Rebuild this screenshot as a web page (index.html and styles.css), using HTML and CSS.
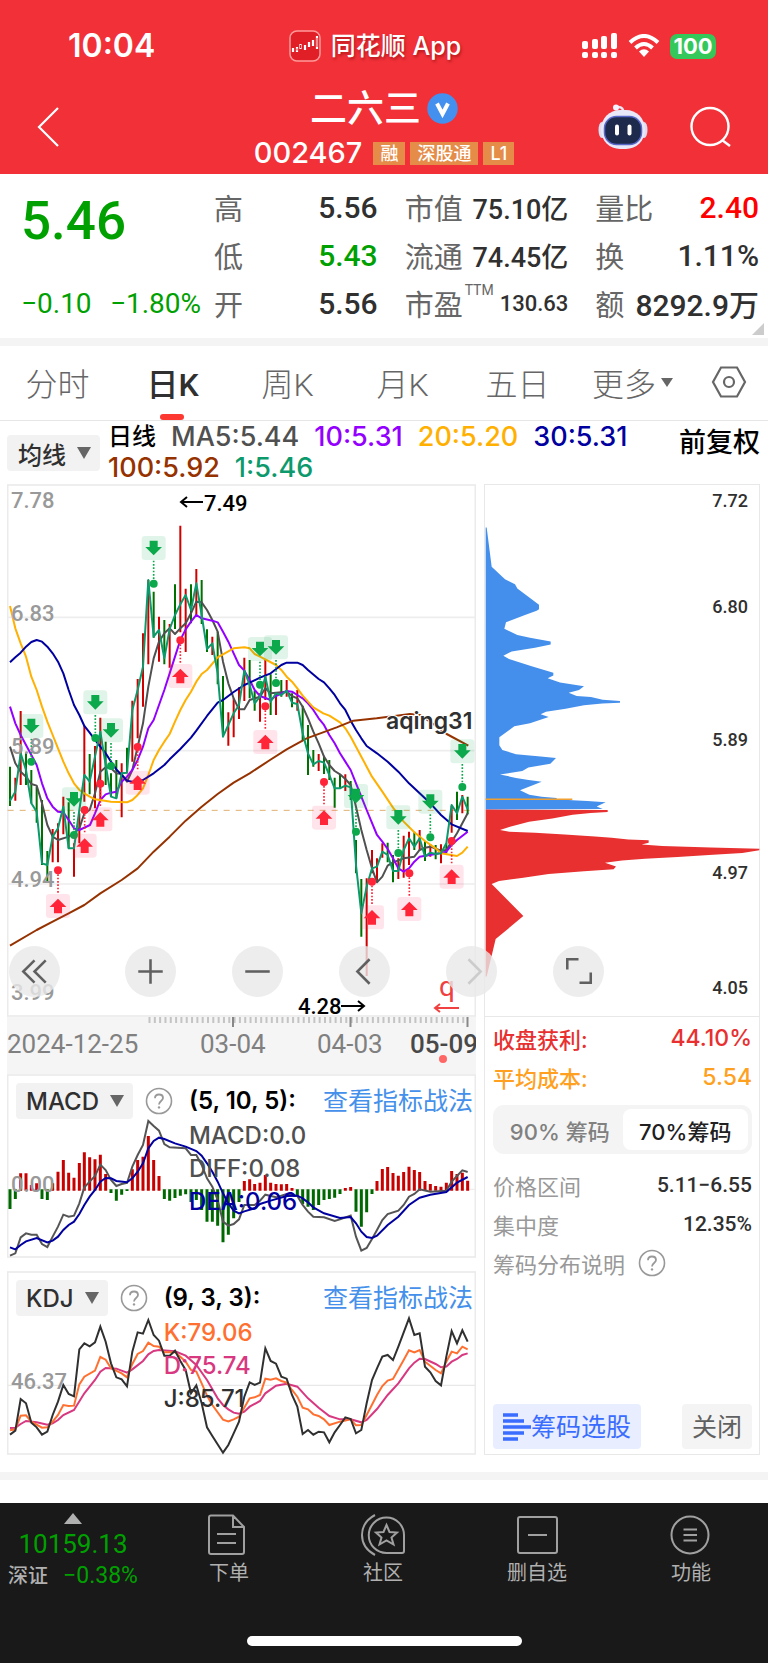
FILE: index.html
```html
<!DOCTYPE html>
<html lang="zh-CN">
<head>
<meta charset="utf-8">
<meta name="viewport" content="width=device-width, initial-scale=1">
<title>二六三 002467</title>
<link rel="stylesheet" href="styles.css">
</head>
<body>
<svg class="defs" aria-hidden="true">
  <defs>
    <g id="sell">
      <rect x="-36" y="-36" width="72" height="72" rx="10" fill="#0aa84a" fill-opacity=".12"/>
      <path d="M-12 -22H12V-3H25L0 22L-25 -3H-12Z" fill="#0ca84c"/>
      <path d="M0 38V104" stroke="#0ca84c" stroke-width="5" stroke-dasharray="5 5"/>
      <circle cy="107" r="12" fill="#0ca84c"/>
    </g>
    <g id="buy">
      <rect x="-36" y="-36" width="72" height="72" rx="10" fill="#ff1f5a" fill-opacity=".12"/>
      <path d="M-12 22H12V3H25L0 -22L-25 3H-12Z" fill="#ff2438"/>
      <path d="M0 -40V-104" stroke="#ff2438" stroke-width="5" stroke-dasharray="5 5"/>
      <circle cy="-107" r="12" fill="#ff2438"/>
    </g>
    <symbol id="help" viewBox="0 0 28 28">
      <circle cx="14" cy="14" r="12.5" fill="none" stroke="#999" stroke-width="1.6"/>
      <path d="M10 11.2C10 6.2 18 6.4 18 11C18 14 14 14 14 17.4" fill="none" stroke="#999" stroke-width="1.8"/>
      <circle cx="14" cy="20.4" r="1.2" fill="#999"/>
    </symbol>
  </defs>
</svg>

<header class="top">
  <div class="status">
    <span class="clock">10:04</span>
    <span class="source">
      <svg width="32" height="32" viewBox="0 0 32 32"><rect x="1" y="1" width="30" height="30" rx="7" fill="#e01f26" stroke="#ff9a9a" stroke-width="1.5"/><path d="M4 18V22M8 17V22M11.500 14V19M16 15V20M20 12V17M24 10V16M28 6V19" stroke="#fff" stroke-width="2.200"/><path d="M8 18.500V20.500M11.500 15V18M28 8V17" stroke="#e01f26" stroke-width="1"/></svg>
      同花顺 App
    </span>
    <span class="signals">
      <svg width="36" height="26" viewBox="0 0 36 26" fill="#fff"><rect y="8" width="6" height="8" rx="2"/><rect x="10" y="6" width="6" height="10" rx="2"/><rect x="19" y="3" width="6" height="13" rx="2"/><rect x="29" y="0" width="6" height="16" rx="2"/><rect y="19" width="6" height="6" rx="2"/><rect x="10" y="19" width="6" height="6" rx="2"/><rect x="19" y="19" width="6" height="6" rx="2"/><rect x="29" y="19" width="6" height="6" rx="2"/></svg>
      <svg width="32" height="24" viewBox="0 0 32 24" fill="none" stroke="#fff" stroke-width="4"><path d="M2 8.500Q16 -4.500 30 8.500"/><path d="M7.500 14Q16 6 24.500 14"/><path d="M11 17.500Q16 13 21 17.500L16 23Z" fill="#fff" stroke="none"/></svg>
      <span class="battery">100</span>
    </span>
  </div>
  <div class="titlebar">
    <button class="icon-btn back" aria-label="返回"><svg width="24" height="40" viewBox="0 0 24 40"><path d="M22 1L3 20L22 39" fill="none" stroke="#fff" stroke-width="2.200"/></svg></button>
    <div class="name">
      <h1>二六三<svg width="31" height="31" viewBox="0 0 31 31"><circle cx="15.500" cy="15.500" r="15.200" fill="#4490ee"/><path d="M10 10.500L15.500 21L21 10.500" fill="none" stroke="#fff" stroke-width="4"/></svg></h1>
      <p><span class="code">002467</span><span class="tag">融</span><span class="tag">深股通</span><span class="tag">L1</span></p>
    </div>
    <div class="actions">
      <button class="icon-btn" aria-label="助手">
        <svg width="50" height="48" viewBox="0 0 50 48"><path d="M25 10Q26 4 20 4" fill="none" stroke="#e8e6f5" stroke-width="2.500"/><circle cx="18" cy="4.500" r="3" fill="#f4f2ff"/><ellipse cx="4" cy="27" rx="3.500" ry="8" fill="#dcdcf2"/><ellipse cx="46" cy="27" rx="3.500" ry="8" fill="#dcdcf2"/><rect x="3" y="7" width="44" height="39" rx="19" fill="#e9e8f8"/><rect x="6.500" y="13.500" width="37" height="28" rx="12" fill="#1d2a4b" stroke="#5866c8" stroke-width="1.500"/><rect x="17" y="21.500" width="4" height="11" rx="2" fill="#fff"/><rect x="29.500" y="21.500" width="4" height="11" rx="2" fill="#fff"/></svg>
      </button>
      <button class="icon-btn" aria-label="搜索"><svg width="42" height="42" viewBox="0 0 42 42" fill="none" stroke="#fff" stroke-width="2.400"><circle cx="20" cy="20.500" r="18.500"/><path d="M32 34L40 40"/></svg></button>
    </div>
  </div>
</header>

<main>
<section class="quote">
  <div class="price"><strong>5.46</strong><span>−0.10</span><span>−1.80%</span></div>
  <dl class="c1">
    <div><dt>高</dt><dd>5.56</dd></div>
    <div><dt>低</dt><dd class="down">5.43</dd></div>
    <div><dt>开</dt><dd>5.56</dd></div>
  </dl>
  <dl class="c2">
    <div><dt>市值</dt><dd>75.10亿</dd></div>
    <div><dt>流通</dt><dd>74.45亿</dd></div>
    <div><dt>市盈<sup>TTM</sup></dt><dd class="small">130.63</dd></div>
  </dl>
  <dl class="c3">
    <div><dt>量比</dt><dd class="up">2.40</dd></div>
    <div><dt>换</dt><dd>1.11%</dd></div>
    <div><dt>额</dt><dd>8292.9万</dd></div>
  </dl>
</section>

<nav class="tabs">
  <button>分时</button>
  <button class="on">日K</button>
  <button>周K</button>
  <button>月K</button>
  <button>五日</button>
  <button>更多<i class="caret sm"></i></button>
  <button aria-label="设置"><svg width="36" height="32" viewBox="0 0 36 32" fill="none" stroke="#666" stroke-width="2.200"><path d="M10 1.500H26L34 16L26 30.500H10L2 16Z"/><circle cx="18" cy="16" r="5"/></svg></button>
</nav>

<section class="legend">
  <button class="pick">均线<i class="caret"></i></button>
  <p><b>日线</b><span class="ma5">MA5:5.44</span><span class="ma10">10:5.31</span><span class="ma20">20:5.20</span><span class="ma30">30:5.31</span><span class="ma100">100:5.92</span><span class="ma1">1:5.46</span></p>
  <button class="adjust">前复权</button>
</section>

<section class="board">
  <div class="left">
    <svg class="chart" viewBox="7 484 469 533" role="img" aria-label="日K线图">
      <g transform="translate(0 480) scale(.33333)" fill="none">
        <rect x="23" y="15" width="1403" height="1593" stroke="#ebebeb" stroke-width="5"/>
        <path d="M23 412H1426M23 812H1426M23 1212H1426" stroke="#ededed" stroke-width="5"/>
        <path d="M23 991H1426" stroke="#e0b070" stroke-width="3" stroke-dasharray="18 18"/>
        <path stroke="#007000" stroke-width="6" d="M30 860V978M78 820V915M94 870V970M110 920V1028M126 960V1155M142 1113V1203M206 967V1105M269 822V943M317 785V915M333 880V950M349 840V955M381 803V880M461 335V473M493 420V553M525 313V447M573 313V430M605 300V432M621 448V516M653 455V613M669 588V770M749 540V655M764 632V692M812 583V705M844 600V650M876 640V682M908 677V780M924 735V885M940 810V860M972 827V882M988 840V900M1004 893V983M1020 885V925M1052 903V960M1068 1080V1180M1084 1197V1370M1163 1088V1147M1179 1125V1207M1243 1055V1110M1275 1083V1143M1307 1095V1138M1339 1090V1120M1371 935V1020M1403 950V1003"/>
        <path stroke="#d00000" stroke-width="6" d="M46 893V962M62 693V915M158 1047V1147M174 1030V1147M190 950V1063M222 1090V1190M238 1000V1090M253 737V965M285 798V985M301 713V960M365 850V1012M397 662V845M413 597V775M429 460V680M445 300V553M477 410V545M509 432V563M541 137V457M557 326V516M589 267V405M637 470V525M685 697V797M701 655V772M717 622V717M733 533V663M780 640V725M796 540V660M828 640V705M860 600V650M892 630V692M956 822V873M1036 883V933M1100 1195V1488M1116 1110V1180M1131 1135V1200M1147 1090V1133M1195 1135V1197M1211 1067V1193M1227 1055V1155M1259 1050V1110M1291 1093V1130M1323 1093V1150M1355 977V1058M1387 945V1000"/>
        <g stroke-width="6" stroke-linejoin="round">
          <polyline stroke="#505050" points="30,800 46,850 62,875 78,890 94,912 110,917 126,970 142,1035 158,1070 174,1080 206,1070 222,1060 238,1045 253,1000 269,990 285,940 301,875 317,862 333,865 349,880 365,882 381,905 397,870 413,800 429,730 445,620 461,535 477,485 493,460 509,445 525,462 541,445 557,430 573,400 589,365 605,367 621,390 637,420 653,455 669,545 685,610 701,655 717,688 733,688 749,660 780,650 796,625 812,640 860,635 876,648 892,655 908,680 924,715 940,755 956,790 972,830 988,855 1004,873 1020,883 1036,897 1052,915 1068,980 1084,1050 1100,1110 1116,1165 1131,1207 1147,1190 1163,1157 1179,1147 1211,1135 1243,1130 1259,1110 1275,1103 1291,1100 1323,1112 1339,1110 1355,1085 1371,1060 1387,1030 1403,1000"/>
          <polyline stroke="#9400ff" points="30,680 46,730 62,765 78,795 94,825 110,855 126,910 142,955 158,980 174,995 190,997 206,1020 222,1045 238,1050 270,1035 285,1000 301,960 317,943 333,938 349,935 365,905 381,890 397,870 413,840 429,800 445,745 461,720 477,675 493,630 509,580 525,530 541,480 557,448 573,425 589,405 605,415 637,422 653,427 669,455 685,485 701,520 717,555 733,572 749,600 764,630 780,648 812,660 828,648 860,633 876,635 892,645 908,655 924,670 940,690 956,715 972,735 988,765 1004,790 1020,820 1036,845 1052,870 1068,910 1084,950 1100,990 1131,1065 1147,1085 1163,1107 1179,1135 1195,1165 1211,1175 1227,1165 1243,1145 1259,1130 1307,1122 1339,1115 1355,1095 1371,1080 1403,1055"/>
          <polyline stroke="#ffb000" points="30,378 46,445 62,490 78,530 94,590 110,630 126,680 142,725 158,765 174,805 190,845 206,880 222,910 238,930 253,940 269,950 285,958 333,965 381,967 397,960 413,945 429,925 445,885 461,840 477,810 493,785 509,762 525,725 541,690 557,660 573,635 589,605 605,582 621,570 653,532 669,523 701,505 733,502 749,505 764,522 780,530 828,555 844,570 860,590 876,605 892,625 908,647 924,665 940,682 970,700 988,707 1020,727 1036,745 1052,770 1068,800 1084,830 1100,860 1116,890 1147,935 1179,983 1211,1025 1243,1057 1275,1083 1307,1105 1323,1120 1371,1128 1387,1118 1403,1100"/>
          <polyline stroke="#0000a0" points="30,547 46,532 62,518 78,500 94,486 110,480 126,485 142,500 158,520 174,545 190,580 206,630 222,675 238,705 253,738 269,758 285,780 301,800 317,820 333,845 349,868 365,885 381,902 397,905 413,902 429,900 461,880 493,855 509,838 541,807 573,773 589,752 621,708 653,668 669,660 701,636 733,615 749,608 780,593 812,580 844,555 860,548 892,548 908,555 924,570 956,597 972,607 988,625 1004,645 1020,670 1036,690 1052,722 1068,750 1084,775 1100,798 1131,820 1163,845 1195,875 1227,910 1259,940 1291,970 1323,1005 1355,1033 1403,1053"/>
          <polyline stroke="#963200" points="30,1397 110,1350 158,1325 206,1300 253,1275 301,1240 365,1200 413,1165 461,1115 509,1070 557,1022 605,980 653,942 701,908 749,880 810,840 860,808 920,775 1010,742 1060,722 1130,715 1190,707 1230,702 1260,705 1300,732 1340,762 1405,797"/>
          <polyline stroke="#0c9a6c" points="30,962 46,935 62,820 78,870 94,970 110,995 126,1150 142,1155 158,1070 174,1045 190,980 206,1105 222,1105 238,990 253,885 269,905 285,830 301,755 317,855 333,950 349,955 365,880 381,878 397,690 413,630 429,560 445,300 461,470 477,450 493,535 509,447 525,405 541,373 557,345 573,390 589,310 605,405 621,507 637,490 653,580 669,770 685,735 701,700 717,675 733,572 749,615 764,670 780,650 796,590 812,665 828,640 844,645 860,632 876,668 892,672 908,760 924,820 940,853 956,843 972,848 988,885 1004,925 1020,925 1036,917 1052,922 1068,1155 1084,1300 1100,1220 1116,1165 1131,1160 1147,1115 1163,1125 1179,1173 1195,1173 1211,1110 1227,1075 1243,1100 1259,1075 1275,1130 1291,1118 1307,1122 1323,1120 1339,1090 1355,975 1371,1000 1387,950 1403,988"/>
        </g>
        <use href="#sell" x="94" y="738"/><use href="#sell" x="222" y="958"/><use href="#sell" x="286" y="667"/><use href="#sell" x="333" y="751"/><use href="#sell" x="461" y="204"/><use href="#sell" x="780" y="507"/><use href="#sell" x="828" y="502"/><use href="#sell" x="1068" y="948"/><use href="#sell" x="1195" y="1012"/><use href="#sell" x="1291" y="965"/><use href="#sell" x="1387" y="814"/>
        <use href="#buy" x="174" y="1278"/><use href="#buy" x="254" y="1097"/><use href="#buy" x="301" y="1018"/><use href="#buy" x="413" y="908"/><use href="#buy" x="541" y="588"/><use href="#buy" x="796" y="786"/><use href="#buy" x="972" y="1013"/><use href="#buy" x="1116" y="1312"/><use href="#buy" x="1228" y="1287"/><use href="#buy" x="1355" y="1190"/>
      </g>
      <g class="scale">
        <text x="11" y="508">7.78</text><text x="11" y="621">6.83</text><text x="11" y="754">5.89</text><text x="11" y="887">4.94</text><text x="11" y="1000">3.99</text>
      </g>
      <g class="peak"><text x="204" y="511">7.49</text><text x="298" y="1014">4.28</text></g>
      <path d="M203 502H181M187 497L181 502L187 507M341 1006H364M358 1001L364 1006L358 1011" fill="none" stroke="#000" stroke-width="2"/>
      <text class="user" x="386" y="729">aqing31</text>
      <text class="mark" x="439" y="996">q</text>
      <path d="M459 1008H435M440 1004L435 1008L440 1012" fill="none" stroke="#f04040" stroke-width="2"/>
    </svg>
    <svg class="chart dates" viewBox="7 1017 469 57">
      <path d="M148.500 1020H466" stroke="#c4c4c4" stroke-width="6" stroke-dasharray="2 3.318"/>
      <path d="M233 1017V1027M350.500 1017V1027M467.500 1017V1027" stroke="#888" stroke-width="2"/>
      <text x="7" y="1053">2024-12-25</text><text x="200" y="1053">03-04</text><text x="317" y="1053">04-03</text><text class="now" x="410" y="1053">05-09</text>
      <circle cx="443" cy="1059" r="4" fill="#f66"/>
    </svg>

    <article class="indicator">
      <svg class="plot" viewBox="7 1074 469 184" role="img" aria-label="MACD">
        <g transform="translate(0 1070) scale(.33333)" fill="none">
          <rect x="23" y="15" width="1403" height="546" stroke="#ebebeb" stroke-width="5"/>
          <path d="M23 358H1426" stroke="#ededed" stroke-width="4"/>
          <path stroke="#c80000" stroke-width="9" d="M62 362V310M78 362V310M94 362V345M110 362V340M158 362V340M174 362V305M190 362V270M206 362V308M222 362V323M238 362V279M253 362V247M269 362V262M285 362V268M301 362V254M317 362V312M397 362V298M413 362V270M429 362V260M445 362V198M461 362V270M477 362V318M733 362V333M749 362V328M764 362V342M780 362V338M796 362V315M812 362V338M828 362V342M844 362V343M860 362V342M876 362V354M1036 362V354M1052 362V351M1131 362V333M1147 362V297M1163 362V291M1179 362V309M1195 362V317M1211 362V306M1227 362V290M1243 362V300M1259 362V306M1275 362V333M1291 362V342M1307 362V348M1323 362V350M1339 362V338M1355 362V303M1371 362V312M1387 362V308M1403 362V332"/>
          <path stroke="#006800" stroke-width="9" d="M30 358V417M46 358V387M126 358V387M142 358V390M333 358V369M349 358V392M365 358V374M381 358V363M493 358V387M509 358V392M525 358V384M541 358V377M557 358V373M573 358V396M589 358V390M605 358V420M621 358V455M637 358V455M653 358V467M669 358V517M685 358V494M701 358V445M717 358V396M892 358V378M908 358V402M924 358V410M940 358V420M956 358V405M972 358V390M988 358V387M1004 358V383M1020 358V372M1068 358V425M1084 358V470M1100 358V427M1116 358V372"/>
          <polyline stroke="#555" stroke-width="6" points="30,557 46,550 62,502 78,490 94,494 110,494 126,522 142,531 158,500 174,470 190,434 206,440 222,437 238,400 253,352 269,335 285,318 301,284 317,300 333,330 349,348 365,342 381,339 397,290 413,255 429,225 445,153 461,168 477,182 493,222 509,232 557,235 573,255 589,255 605,285 621,325 637,350 653,390 669,455 685,467 701,462 717,448 733,405 764,405 780,392 796,374 828,382 860,372 892,378 908,405 924,425 940,440 972,442 1004,453 1020,448 1052,437 1068,500 1084,542 1100,534 1116,507 1131,480 1147,450 1163,432 1195,422 1211,405 1227,380 1243,372 1259,358 1291,365 1339,362 1355,335 1371,318 1387,301 1403,306"/>
          <polyline stroke="#0000a0" stroke-width="6" points="30,532 46,538 62,525 78,514 110,504 142,517 158,512 174,500 190,480 206,465 222,455 238,432 253,405 269,380 285,360 301,335 317,324 333,325 349,333 381,337 397,325 413,305 429,280 445,235 461,213 477,203 493,207 525,220 557,230 589,243 605,257 621,280 637,305 653,335 669,370 685,400 701,422 717,430 733,424 764,415 780,402 812,392 860,378 892,377 908,385 924,397 940,412 972,430 1020,444 1052,441 1068,460 1084,485 1100,501 1116,504 1131,497 1163,465 1195,440 1227,405 1259,383 1291,374 1339,366 1371,338 1403,321"/>
        </g>
        <g class="scale"><text x="11" y="1192">0.00</text></g>
      </svg>
      <button class="pick">MACD<i class="caret"></i></button>
      <button class="help" aria-label="说明"><svg width="28" height="28"><use href="#help"/></svg></button>
      <div class="values"><b>(5, 10, 5):</b><span class="gray">MACD:0.0</span><span class="gray">DIFF:0.08</span><span class="navy">DEA:0.06</span></div>
      <a href="#">查看指标战法</a>
    </article>

    <article class="indicator">
      <svg class="plot" viewBox="7 1271 469 184" role="img" aria-label="KDJ">
        <g transform="translate(0 1260) scale(.33333)" fill="none" stroke-width="6">
          <rect x="23" y="36" width="1403" height="546" stroke="#ebebeb" stroke-width="5"/>
          <path d="M23 376H1426" stroke="#e8e8e8" stroke-width="4"/>
          <polyline stroke="#d83880" points="30,504 46,503 62,492 78,483 110,487 142,494 158,490 174,480 190,465 222,450 253,400 285,360 301,335 317,324 349,326 381,338 397,328 429,303 445,283 461,273 477,270 525,274 557,287 589,315 621,360 653,415 669,435 685,448 701,458 717,461 733,455 749,440 780,423 796,400 828,377 860,371 892,380 924,415 956,443 988,468 1020,478 1052,478 1084,487 1100,480 1131,447 1163,405 1195,370 1227,325 1243,308 1259,296 1275,297 1307,312 1323,322 1339,320 1355,305 1371,297 1387,285 1403,280"/>
          <polyline stroke="#ff7030" points="30,511 46,508 62,467 78,466 94,485 126,503 142,502 158,485 174,465 190,435 206,438 222,437 238,373 253,350 285,332 301,291 317,299 333,325 365,340 381,352 397,312 413,282 429,273 445,248 461,258 477,260 493,277 525,277 541,290 557,305 573,330 589,335 605,370 621,407 637,435 669,479 685,484 701,478 717,470 749,415 764,412 780,405 796,356 812,359 828,355 844,363 860,368 876,390 892,410 908,443 924,448 940,463 956,468 972,478 988,495 1020,485 1052,478 1068,496 1084,495 1100,465 1131,405 1147,378 1163,362 1179,357 1211,300 1227,271 1243,277 1259,270 1275,305 1307,330 1323,340 1339,305 1355,275 1371,280 1387,260 1403,268"/>
          <polyline stroke="#303030" points="30,524 46,512 62,417 78,430 94,488 110,502 126,524 142,515 158,465 174,425 190,375 206,402 222,409 238,268 253,250 269,259 285,247 301,200 317,245 333,310 349,352 365,358 381,379 397,275 413,217 429,221 445,180 461,225 477,242 493,287 509,287 525,272 541,303 557,330 573,400 589,376 605,430 621,502 637,528 669,578 685,555 701,520 717,485 733,410 749,367 764,375 780,368 796,265 812,303 828,311 844,350 860,356 876,405 892,440 908,522 924,510 940,524 956,515 972,517 988,547 1004,517 1020,495 1036,472 1052,477 1068,520 1084,510 1100,430 1116,360 1131,325 1147,290 1163,285 1179,300 1195,260 1227,175 1243,225 1259,220 1275,320 1291,337 1307,363 1323,376 1339,290 1355,213 1371,250 1387,211 1403,245"/>
        </g>
        <g class="scale"><text x="11" y="1389">46.37</text></g>
      </svg>
      <button class="pick">KDJ<i class="caret"></i></button>
      <button class="help" aria-label="说明"><svg width="28" height="28"><use href="#help"/></svg></button>
      <div class="values"><b>(9, 3, 3):</b><span class="orange">K:79.06</span><span class="pink">D:75.74</span><span class="dark">J:85.71</span></div>
      <a href="#">查看指标战法</a>
    </article>
  </div>

  <aside class="chips">
    <svg class="chart" viewBox="484 484 276 532" role="img" aria-label="筹码分布">
      <g transform="translate(480 480) scale(.33333 .3444)">
        <path fill="#448fec" d="M17 138L20 138L35 252L75 288L105 303L112 315L177 362L177 375L170 380L135 392L78 413L73 432L112 450L150 458L212 469L212 478L165 487L95 498L70 510L87 520L155 541L220 560L220 568L203 576L240 588L312 599L297 610L266 618L290 627L333 630L368 638L420 642L420 647L367 649L312 654L257 664L198 673L182 680L206 688L150 706L103 715L58 747L58 770L67 784L108 796L182 803L228 807L211 824L145 835L127 845L60 855L108 865L146 871L185 876L120 901L148 914L185 920L230 923L230 927L277 930L322 932L377 936L350 948L368 955L17 957Z"/>
        <path fill="#e83030" d="M17 957L383 958L383 964L332 967L278 972L217 983L147 992L90 1007L60 1016L88 1021L165 1024L254 1029L345 1035L395 1039L445 1044L506 1046L506 1053L485 1058L547 1063L692 1067L838 1071L838 1075L787 1083L687 1089L593 1095L495 1100L426 1105L375 1111L408 1122L401 1130L312 1136L206 1144L155 1151L130 1155L57 1164L35 1173L130 1266L47 1333L20 1442H17Z"/>
        <path d="M17 927H277" stroke="#f0a030" stroke-width="4"/>
      </g>
      <g class="costs"><text x="748" y="507">7.72</text><text x="748" y="613">6.80</text><text x="748" y="746">5.89</text><text x="748" y="879">4.97</text><text x="748" y="994">4.05</text></g>
    </svg>
    <div class="info">
      <p class="row red"><span>收盘获利:</span><b>44.10%</b></p>
      <p class="row amber"><span>平均成本:</span><b>5.54</b></p>
      <div class="segment"><button>90% 筹码</button><button class="on">70%筹码</button></div>
      <p class="row"><span>价格区间</span><em>5.11−6.55</em></p>
      <p class="row"><span>集中度</span><em>12.35%</em></p>
      <p class="row note"><span>筹码分布说明</span><svg width="28" height="28"><use href="#help"/></svg></p>
      <div class="foot">
        <button class="choose"><svg width="28" height="28" viewBox="0 0 28 28"><path d="M0 2H15M0 8H21M0 14H28M0 20H21M0 26H15" stroke="#3a6cff" stroke-width="3.500"/></svg>筹码选股</button>
        <button class="close">关闭</button>
      </div>
    </div>
  </aside>

  <div class="controls">
    <button class="first" aria-label="最早"><svg viewBox="0 0 50 50"><path d="M25 14L14 25L25 36M36 14L25 25L36 36"/></svg></button>
    <button aria-label="放大"><svg viewBox="0 0 50 50"><path d="M25 13V37M13 25H37"/></svg></button>
    <button aria-label="缩小"><svg viewBox="0 0 50 50"><path d="M13 25H37"/></svg></button>
    <button aria-label="前移"><svg viewBox="0 0 50 50"><path d="M30 13L18 25L30 37"/></svg></button>
    <button aria-label="后移" disabled><svg viewBox="0 0 50 50"><path d="M22 13L34 25L22 37"/></svg></button>
    <button aria-label="全屏"><svg viewBox="0 0 50 50"><path d="M14 23V13H25M37 26V36H26"/></svg></button>
  </div>
</section>
</main>

<footer class="bottom">
  <div class="dock">
    <a href="#" class="index"><i></i><strong>10159.13</strong><span><b>深证</b><em>−0.38%</em></span></a>
    <a href="#"><svg width="44" height="42" viewBox="0 0 44 42"><path d="M26 1.500H4Q2 1.500 2 3.500V38Q2 40 4 40H35Q37 40 37 38V13ZM26 2V13H36M10 20H29M10 29H29"/></svg>下单</a>
    <a href="#"><svg width="44" height="42" viewBox="0 0 44 42"><path d="M14 1Q1 8 1 21Q1 34 14 41M25.500 3.500A17.500 17.500 0 0 0 25.500 39H41Q43 39 43 37V21A17.500 17.500 0 0 0 25.500 3.500Z"/><path d="M25.500 11L28.500 18L36 18.500L30.500 23.500L32.500 30.500L25.500 26.500L18.500 30.500L20.500 23.500L15 18.500L22.500 18Z"/></svg>社区</a>
    <a href="#"><svg width="44" height="42" viewBox="0 0 44 42"><rect x="3" y="3" width="39" height="36" rx="2"/><path d="M13 21H32"/></svg>删自选</a>
    <a href="#"><svg width="44" height="42" viewBox="0 0 44 42"><circle cx="21" cy="21" r="18.500"/><path d="M14.500 15.500H28M14.500 21H28M14.500 26.500H28"/></svg>功能</a>
  </div>
  <div class="home"></div>
</footer>
</body>
</html>
```
FILE: styles.css
```css
* { box-sizing: border-box; }
body, h1, p, dl, dd { margin: 0; }
body {
  display: flex;
  flex-direction: column;
  min-height: 100vh;
  background: #fff;
  color: #303030;
  font-family: Inter, "Noto Sans CJK SC", sans-serif;
}
button {
  border: 0;
  padding: 0;
  background: none;
  color: inherit;
  font: inherit;
}
a { color: inherit; text-decoration: none; }
em, i { font-style: normal; }
svg { flex: none; }
.defs { position: absolute; width: 0; height: 0; }

/* Header */
.top { height: 174px; background: #f23038; color: #fff; }
.status {
  display: grid;
  grid-template-columns: 1fr auto 1fr;
  align-items: center;
  padding: 26px 52px 0 34px;
  height: 62px;
}
.clock { padding-left: 34px; font-size: 32px; font-weight: 600; line-height: 36px; }
.source {
  display: flex;
  align-items: center;
  gap: 10px;
  font-size: 25px;
  font-weight: 500;
  line-height: 40px;
  text-shadow: 1px 2px 3px #7008;
}
.signals { display: flex; align-items: center; justify-content: flex-end; gap: 10px; }
.battery {
  width: 46px;
  border-radius: 7px;
  background: #34c759;
  font-size: 22px;
  font-weight: 700;
  line-height: 25px;
  text-align: center;
}
.titlebar {
  display: grid;
  grid-template-columns: 1fr auto 1fr;
  align-items: center;
  height: 112px;
  padding: 18px 36px 0;
}
.icon-btn { display: flex; justify-content: center; }
.back { justify-self: start; }
.name { padding-bottom: 3px; text-align: center; }
.name h1 {
  display: flex;
  align-items: center;
  justify-content: center;
  gap: 6px;
  font-size: 37px;
  font-weight: 500;
  line-height: 55px;
}
.name p { display: flex; align-items: center; gap: 5px; line-height: 34px; }
.code { margin-right: 6px; font-size: 29px; font-weight: 500; }
.tag {
  padding: 0 7px;
  background: #e48c48;
  font-size: 18px;
  font-weight: 500;
  line-height: 23px;
}
.actions { display: flex; justify-content: flex-end; align-items: center; gap: 42px; }

/* Quote */
.quote {
  position: relative;
  display: grid;
  grid-template-columns: 166px 1fr 1fr 1fr;
  column-gap: 27px;
  height: 172px;
  padding: 9px 9px 0 21px;
  border-bottom: 8px solid #f4f4f4;
  font-family: Roboto, "Noto Sans CJK SC", sans-serif;
}
.quote::after {
  content: "";
  position: absolute;
  right: 4px;
  bottom: 3px;
  border: solid transparent;
  border-width: 6px;
  border-right-color: #ccc;
  border-bottom-color: #ccc;
}
.price { display: flex; flex-wrap: wrap; justify-content: space-between; align-content: flex-start; width: 180px; color: #00a000; }
.price strong { flex: 1 0 100%; font-size: 53px; font-weight: 500; line-height: 76px; }
.price span { padding-top: 28px; font-size: 28px; line-height: 34px; white-space: nowrap; }
.quote dl > div { display: flex; align-items: center; justify-content: space-between; height: 48px; white-space: nowrap; }
.quote dt { position: relative; color: #666; font-size: 29px; }
.quote dd { font-size: 30px; font-weight: 500; }
.quote .c2 dd { font-size: 27px; }
.quote .c2 .small { font-size: 22px; }
.quote sup { position: absolute; left: 60px; top: 0; font-size: 14px; line-height: 16px; }
.quote .down { color: #00a000; }
.quote .up { color: #f00; }

/* Period tabs */
.tabs {
  display: grid;
  grid-template-columns: repeat(6, 115fr) 78fr;
  justify-items: center;
  height: 75px;
  border-bottom: 1px solid #e6e6e6;
  color: #666;
  font-family: Roboto, "Noto Sans CJK SC", sans-serif;
  font-size: 32px;
  font-weight: 300;
}
.tabs button { position: relative; display: flex; align-items: center; height: 72px; white-space: nowrap; }
.tabs .on { color: #303030; font-weight: 500; }
.tabs .on::after {
  content: "";
  position: absolute;
  left: 50%;
  bottom: -2px;
  width: 24px;
  height: 6px;
  margin-left: -12px;
  border-radius: 3px;
  background: #fc3830;
}
.caret {
  border: solid transparent;
  border-width: 12px 7px 0;
  border-top-color: #666;
}
.caret.sm { margin-left: 5px; border-width: 9px 6px 0; }

/* Moving average legend */
.legend { display: flex; height: 63px; padding: 0 8px 0 7px; }
.pick {
  display: flex;
  align-items: center;
  gap: 11px;
  height: 36px;
  padding: 0 9px 0 10px;
  border-radius: 4px;
  background: #f2f2f2;
  color: #303030;
  font-size: 24px;
  font-weight: 500;
  white-space: nowrap;
}
.legend .pick { margin-top: 14px; padding-left: 11px; }
.legend p {
  display: flex;
  flex: 1;
  flex-wrap: wrap;
  align-content: flex-start;
  column-gap: 15px;
  padding-left: 8px;
  font-size: 27px;
  font-weight: 500;
  line-height: 31px;
}
.legend b { color: #000; font-size: 24px; font-weight: 500; }
.ma5 { color: #505050; }
.ma10 { color: #9400ff; }
.ma20 { color: #ffb000; }
.ma30 { color: #0000a0; }
.ma100 { color: #963200; }
.ma1 { color: #0c9a6c; }
.adjust { align-self: flex-start; color: #000; font-size: 27px; font-weight: 500; line-height: 44px; white-space: nowrap; }

/* Charts */
.board {
  position: relative;
  display: grid;
  grid-template-columns: 469fr 276fr;
  gap: 8px;
  padding: 0 8px 17px 7px;
  border-bottom: 8px solid #f4f4f4;
}
.chart { display: block; width: 100%; height: auto; }
svg text { font-family: Roboto, sans-serif; }
.scale { fill: #999; font-size: 22px; font-weight: 500; }
.peak { fill: #000; font-size: 22px; font-weight: 500; }
svg .user { fill: #303030; stroke: #fff; stroke-width: 2px; paint-order: stroke; font-family: Inter, sans-serif; font-size: 23px; font-weight: 600; }
.mark { fill: #f04040; font-size: 28px; }
.dates { background: #f5f5f5; fill: #808080; font-size: 26px; }
.now { fill: #484848; font-weight: 500; }
.indicator {
  position: relative;
  display: flex;
  align-items: flex-start;
  aspect-ratio: 469 / 184;
  padding: 9px 3px 0 9px;
}
.indicator + .indicator { margin-top: 13px; }
.plot { position: absolute; inset: 0; width: 100%; height: 100%; }
.indicator > :not(.plot) { position: relative; }
.help { display: flex; margin: 4px 0 0 12px; }
.values { display: grid; margin-left: 16px; font-size: 24px; font-weight: 500; line-height: 33px; white-space: nowrap; }
.values b { color: #000; font-weight: 600; line-height: 36px; }
.gray { color: #505050; }
.navy { color: #0000a0; }
.orange { color: #ff7030; }
.pink { color: #d83880; }
.dark { color: #303030; }
.indicator a { margin-left: auto; color: #4490ea; font-size: 25px; line-height: 36px; white-space: nowrap; }

.controls { position: absolute; top: 462px; left: 9px; display: flex; gap: 56px; }
.controls button { width: 51px; height: 51px; border-radius: 50%; background: #e9e9e9cc; }
.controls .first { margin-right: 9px; }
.controls svg { display: block; fill: none; stroke: #606060; stroke-width: 2.5px; }
.controls :disabled svg { stroke: #ccc; }

/* Chip distribution */
.chips { display: flex; flex-direction: column; box-shadow: inset 0 0 0 1px #e8e8e8; }
.costs { font-size: 18px; font-weight: 500; fill: #303030; text-anchor: end; }
.info { display: flex; flex: 1; flex-direction: column; padding: 1px 8px 6px 9px; border-top: 1px solid #e8e8e8; }
.row { display: flex; align-items: center; justify-content: space-between; height: 39px; color: #999; font-size: 22px; }
.row b { font-size: 23px; font-weight: 500; }
.row em { color: #303030; font-family: Roboto, sans-serif; font-size: 21px; font-weight: 500; }
.red { color: #e83030; font-weight: 500; }
.amber { color: #ffa020; font-weight: 500; }
.note { justify-content: flex-start; gap: 13px; }
.segment {
  display: grid;
  grid-template-columns: 1fr 1fr;
  margin: 9px 0 11px;
  padding: 4px;
  border-radius: 11px;
  background: #f4f4f4;
  color: #808080;
  font-size: 22px;
  font-weight: 500;
}
.segment button { height: 41px; border-radius: 8px; white-space: nowrap; }
.segment .on { background: #fff; color: #202020; }
.foot { display: flex; justify-content: space-between; margin-top: auto; font-size: 25px; }
.foot button { display: flex; align-items: center; height: 45px; padding: 0 10px; border-radius: 4px; background: #f4f4f4; color: #606060; line-height: 36px; white-space: nowrap; }
.foot .choose { background: #e8eeff; color: #3a6cff; }

/* Bottom dock */
.bottom { margin-top: auto; height: 160px; background: #191919; color: #b0b0b0; }
.dock { display: grid; grid-template-columns: 152px repeat(4, 1fr); height: 133px; }
.dock a { display: flex; flex-direction: column; align-items: center; gap: 2px; padding-top: 11px; font-size: 20px; line-height: 30px; }
.dock svg { fill: none; stroke: #a0a0a0; stroke-width: 2px; }
.dock .index { gap: 0; padding: 10px 6px 0 0; font-family: Roboto, "Noto Sans CJK SC", sans-serif; }
.index i { border: solid transparent; border-width: 0 9px 11px; border-bottom-color: #b0b0b0; }
.index strong { color: #00a000; font-size: 26px; font-weight: 400; line-height: 40px; }
.index span { display: flex; gap: 15px; line-height: 24px; }
.index b { font-weight: 500; }
.index em { color: #00a000; font-size: 23px; }
.home { width: 275px; height: 10px; margin: 0 auto; border-radius: 5px; background: #fff; }
```
